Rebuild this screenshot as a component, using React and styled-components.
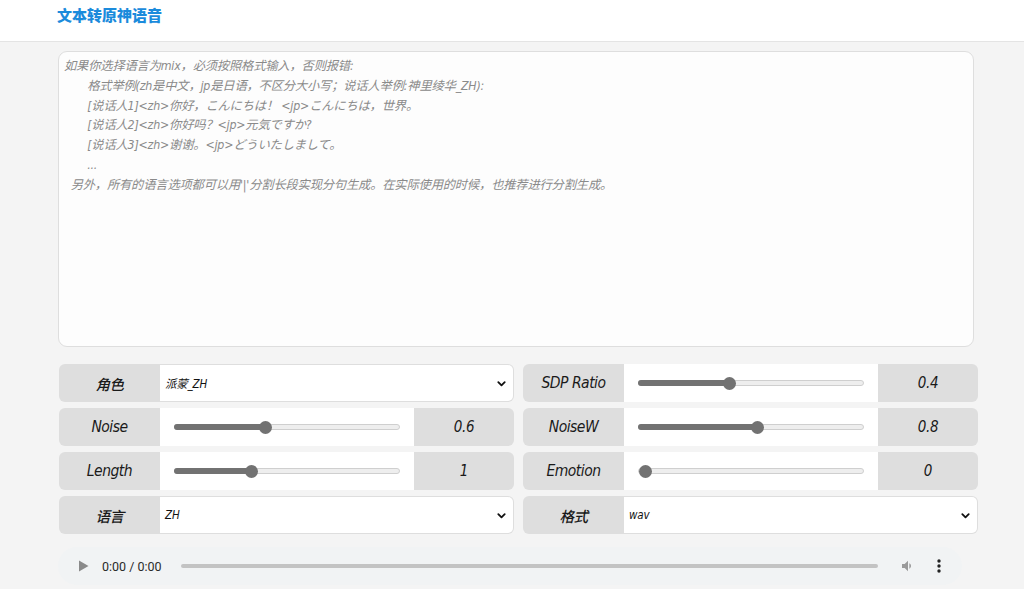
import React from "react";
import styled, { createGlobalStyle } from "styled-components";

const GlobalStyle = createGlobalStyle`
    html, body {
        margin: 0;
        padding: 0;
        background: #f4f4f4;
        font-family: "DejaVu Sans Condensed", "Noto Sans CJK SC", sans-serif;
    }
`;

const Header = styled.header`
    height: 42px;
    background: #ffffff;
    border-bottom: 1px solid #e4e4e4;
    box-sizing: border-box;
    padding: 3px 0 0 57px;
`;

const Title = styled.h1`
    margin: 0;
    font-family: "Noto Sans CJK SC", sans-serif;
    font-size: 15px;
    font-weight: 900;
    color: #1b8bdc;
    line-height: 24px;
`;

const Main = styled.main`
    padding: 9px 0 0 58px;
    width: 920px;
`;

const TextBox = styled.div`
    box-sizing: border-box;
    width: 916px;
    height: 296px;
    background: #fdfdfd;
    border: 1px solid #dedede;
    border-radius: 9px;
    padding: 5px 5px;
    white-space: pre;
    font-family: "DejaVu Sans Condensed", "Noto Sans CJK SC", sans-serif;
    font-style: italic;
    font-size: 12.3px;
    letter-spacing: -0.2px;
    line-height: 19.8px;
    color: #8a8a8a;
`;

const Grid = styled.div`
    display: grid;
    grid-template-columns: 455px 455px;
    grid-auto-rows: 38px;
    column-gap: 9px;
    row-gap: 6px;
    margin: 17px 0 0 1px;
`;

const Control = styled.div`
    display: flex;
    align-items: stretch;
    background: #dedede;
    border-radius: 6px;
    overflow: hidden;
`;

const Label = styled.div`
    width: 101px;
    flex: none;
    display: flex;
    align-items: center;
    justify-content: center;
    font-style: italic;
    font-size: ${p => (p.cjk ? 14.5 : 15.5)}px;
    letter-spacing: -0.5px;
    color: #1a1a1a;
    font-family: "DejaVu Sans Condensed", "Noto Sans CJK SC", sans-serif;
    font-weight: ${p => (p.cjk ? 500 : 400)};
`;

const SliderCell = styled.div`
    flex: 1;
    background: #ffffff;
    display: flex;
    align-items: center;
    padding: 0 14px;
`;

const Track = styled.div`
    position: relative;
    flex: 1;
    height: 6px;
    border-radius: 4px;
    background: #eeeeee;
    border: 1px solid #cfcfcf;
    box-sizing: border-box;
`;

const Fill = styled.div`
    position: absolute;
    left: -1px;
    top: -1px;
    bottom: -1px;
    background: #727272;
    border-radius: 4px;
`;

const Thumb = styled.div`
    position: absolute;
    top: 50%;
    width: 13px;
    height: 13px;
    margin: -6.5px 0 0 -6.5px;
    border-radius: 50%;
    background: #727272;
`;

const Value = styled.div`
    width: 100px;
    flex: none;
    display: flex;
    align-items: center;
    justify-content: center;
    font-style: italic;
    font-size: 15px;
    letter-spacing: -0.3px;
    color: #1a1a1a;
`;

const SelectBox = styled.div`
    flex: 1;
    margin: 1px 1px 1px 0;
    background: #ffffff;
    border-radius: 0 5px 5px 0;
    display: flex;
    align-items: center;
    justify-content: space-between;
    padding: 0 6px 0 5px;
    font-style: italic;
    font-size: 11.5px;
    letter-spacing: -0.2px;
    color: #111;
    font-family: "DejaVu Sans Condensed", "Noto Sans CJK SC", sans-serif;
`;

const Player = styled.div`
    margin-top: 13px;
    width: 904px;
    height: 38px;
    border-radius: 19px;
    background: #f1f3f4;
    display: flex;
    align-items: center;
    padding: 0 0 0 20px;
    box-sizing: border-box;
`;

const Time = styled.span`
    font-family: Roboto, "Liberation Sans", sans-serif;
    font-size: 12.5px;
    color: #2b2b2b;
    margin-left: 13px;
    white-space: nowrap;
`;

const Progress = styled.div`
    flex: 1;
    height: 4px;
    border-radius: 2px;
    background: #c3c3c3;
    margin: 0 22px 0 19px;
`;

const IconSlot = styled.div`
    display: flex;
    align-items: center;
    justify-content: center;
    width: ${p => p.w}px;
`;

const Chevron = () => (
    <svg width="11" height="11" viewBox="0 0 12 12">
        <path d="M2.5 4.5 L6 8 L9.5 4.5" fill="none" stroke="#111" strokeWidth="2" strokeLinecap="round" strokeLinejoin="round" />
    </svg>
);

const Slider = ({ label, value, frac }) => (
    <Control>
        <Label>{label}</Label>
        <SliderCell>
            <Track>
                {frac > 0 && <Fill style={{ width: `calc(6px + ${frac} * (100% - 12px))` }} />}
                <Thumb style={{ left: `calc(6px + ${frac} * (100% - 12px))` }} />
            </Track>
        </SliderCell>
        <Value>{value}</Value>
    </Control>
);

const Select = ({ label, value }) => (
    <Control>
        <Label cjk>{label}</Label>
        <SelectBox>
            <span>{value}</span>
            <Chevron />
        </SelectBox>
    </Control>
);

const text = `如果你选择语言为mix，必须按照格式输入，否则报错:
       格式举例(zh是中文，jp是日语，不区分大小写；说话人举例:神里绫华_ZH):
       [说话人1]<zh>你好，こんにちは！ <jp>こんにちは，世界。
       [说话人2]<zh>你好吗？<jp>元気ですか?
       [说话人3]<zh>谢谢。<jp>どういたしまして。
       ...
  另外，所有的语言选项都可以用'|'分割长段实现分句生成。在实际使用的时候，也推荐进行分割生成。`;

export default function App() {
    return (
        <>
            <GlobalStyle />
            <Header>
                <Title>文本转原神语音</Title>
            </Header>
            <Main>
                <TextBox>{text}</TextBox>
                <Grid>
                    <Select label="角色" value="派蒙_ZH" />
                    <Slider label="SDP Ratio" value="0.4" frac={0.4} />
                    <Slider label="Noise" value="0.6" frac={0.4} />
                    <Slider label="NoiseW" value="0.8" frac={0.533} />
                    <Slider label="Length" value="1" frac={0.333} />
                    <Slider label="Emotion" value="0" frac={0} />
                    <Select label="语言" value="ZH" />
                    <Select label="格式" value="wav" />
                </Grid>
                <Player>
                    <svg width="11" height="12" viewBox="0 0 11 12">
                        <path d="M1 0.5 L10.5 6 L1 11.5 Z" fill="#8a8a8a" />
                    </svg>
                    <Time>0:00 / 0:00</Time>
                    <Progress />
                    <IconSlot w={16}>
                        <svg width="16" height="16" viewBox="0 0 24 24">
                            <path d="M3 9v6h4l5 5V4L7 9H3z M16.5 12c0-1.8-1-3.3-2.5-4v8c1.5-.7 2.5-2.2 2.5-4z" fill="#9a9a9a" />
                        </svg>
                    </IconSlot>
                    <IconSlot w={46}>
                        <svg width="4" height="14" viewBox="0 0 4 14">
                            <circle cx="2" cy="2" r="1.7" fill="#222" />
                            <circle cx="2" cy="7" r="1.7" fill="#222" />
                            <circle cx="2" cy="12" r="1.7" fill="#222" />
                        </svg>
                    </IconSlot>
                </Player>
            </Main>
        </>
    );
}
